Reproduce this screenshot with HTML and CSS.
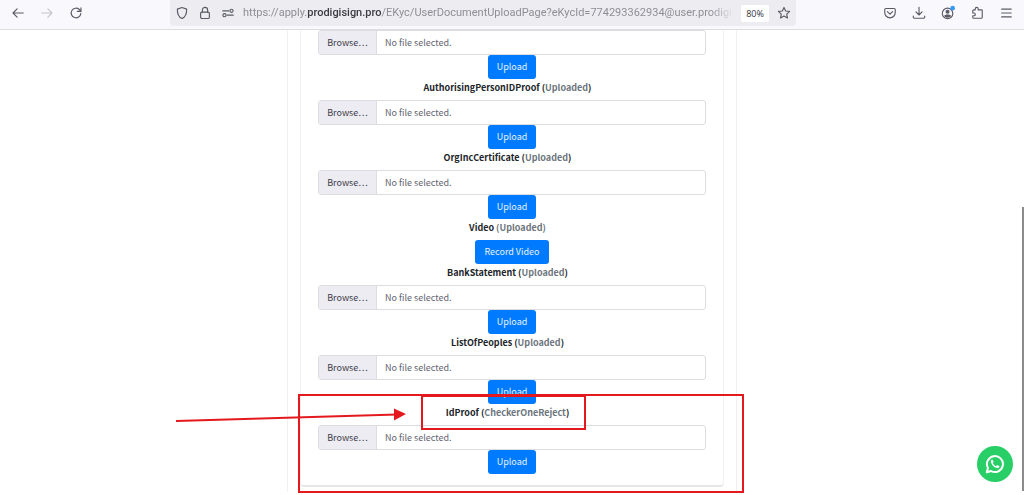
FILE: index.html
```html
<!DOCTYPE html>
<html lang="en">
<head>
    <meta charset="UTF-8">
    <meta name="viewport" content="width=device-width, initial-scale=1.0">
    <title>User Document Upload</title>
    <link rel="stylesheet" href="styles.css">
</head>
<body>
    <header class="toolbar">
        <nav class="nav-buttons">
            <button class="icon-btn" aria-label="Back">
                <svg viewBox="0 0 16 16"><path d="M14 8H2.5M7 3.2L2.3 8L7 12.8"/></svg>
            </button>
            <button class="icon-btn" aria-label="Forward" disabled>
                <svg viewBox="0 0 16 16"><path d="M2 8h11.500M9 3.200L13.700 8L9 12.800"/></svg>
            </button>
            <button class="icon-btn" aria-label="Reload">
                <svg viewBox="0 0 16 16"><path d="M13.500 8.500A5.500 5.500 0 1 1 11.800 4L13.500 5.800M13.700 2v4.200H9.500"/></svg>
            </button>
        </nav>

        <div class="address-bar">
            <button class="icon-btn" aria-label="Tracking protection">
                <svg viewBox="0 0 16 16"><path d="M8 1.700L13.300 3.600C13.500 8.800 11.700 12.500 8 14.300C4.300 12.500 2.500 8.800 2.700 3.600Z"/></svg>
            </button>
            <button class="icon-btn" aria-label="Connection secure">
                <svg viewBox="0 0 16 16"><rect x="3" y="7" width="10" height="7.300" rx="1.500"/><path d="M5 7V4.500a3 3 0 0 1 6 0V7"/></svg>
            </button>
            <button class="icon-btn" aria-label="Permissions">
                <svg viewBox="0 0 16 16"><path d="M2 5.500h7M7 10.500h7"/><circle cx="12" cy="5.500" r="1.800"/><circle cx="4" cy="10.500" r="1.800"/></svg>
            </button>
            <div class="url" role="textbox" aria-label="Address" contenteditable="true" spellcheck="false">https://apply.<b>prodigisign.pro</b>/EKyc/UserDocumentUploadPage?eKycId=774293362934@user.prodigis</div>
            <button class="zoom-level">80%</button>
            <button class="icon-btn" aria-label="Bookmark">
                <svg viewBox="0 0 16 16"><path d="M8 1.600L9.900 5.700L14.400 6.200L11.100 9.300L12 13.800L8 11.500L4 13.800L4.900 9.300L1.600 6.200L6.100 5.700Z"/></svg>
            </button>
        </div>

        <div class="tools">
            <button class="icon-btn" aria-label="Pocket">
                <svg viewBox="0 0 16 16"><path d="M3.300 2.800h9.400a1.300 1.300 0 0 1 1.300 1.300V7.500a6 6 0 0 1-12 0V4.100a1.300 1.300 0 0 1 1.300-1.300ZM5 6.500L8 9.300L11 6.500"/></svg>
            </button>
            <button class="icon-btn" aria-label="Downloads">
                <svg viewBox="0 0 16 16"><path d="M8 1.500V10M4.500 6.800L8 10.300L11.500 6.800M1.500 11.500v1a1.500 1.500 0 0 0 1.500 1.500h10a1.500 1.500 0 0 0 1.500-1.500v-1"/></svg>
            </button>
            <button class="icon-btn" aria-label="Account">
                <svg viewBox="0 0 16 16"><circle cx="7.500" cy="8.500" r="6"/><path class="solid" d="M5.200 6.500a2.300 2.300 0 1 1 4.600 0a2.300 2.300 0 1 1-4.600 0M3.500 11.500c0-2.500 8-2.500 8 0c-2 2.500-6 2.500-8 0Z"/><circle class="notice" cx="13.300" cy="2.500" r="2.700"/></svg>
            </button>
            <button class="icon-btn" aria-label="Extensions">
                <svg viewBox="0 0 16 16"><path d="M6 4.500V3.300a1.700 1.700 0 0 1 3.400 0V4.500H13a1 1 0 0 1 1 1V13a1 1 0 0 1-1 1H4.200a1 1 0 0 1-1-1V11.200h1.300a1.600 1.600 0 0 0 0-3.200H3.200V5.500a1 1 0 0 1 1-1Z"/></svg>
            </button>
            <button class="icon-btn" aria-label="Menu">
                <svg viewBox="0 0 16 16"><path d="M3 3.500h11M3 8h11M3 12.500h11"/></svg>
            </button>
        </div>
    </header>

    <main class="page">
        <div class="panel">
            <form class="card">
                <label class="file-input">
                    <input type="file" class="file-native">
                    <span class="browse">Browse…</span>
                    <span class="file-name">No file selected.</span>
                </label>
                <button type="button" class="btn">Upload</button>

                <h2 class="doc-title">AuthorisingPersonIDProof (<span>Uploaded</span>)</h2>
                <label class="file-input">
                    <input type="file" class="file-native">
                    <span class="browse">Browse…</span>
                    <span class="file-name">No file selected.</span>
                </label>
                <button type="button" class="btn">Upload</button>

                <h2 class="doc-title">OrgIncCertificate (<span>Uploaded</span>)</h2>
                <label class="file-input">
                    <input type="file" class="file-native">
                    <span class="browse">Browse…</span>
                    <span class="file-name">No file selected.</span>
                </label>
                <button type="button" class="btn">Upload</button>

                <h2 class="doc-title">Video <span>(Uploaded)</span></h2>
                <button type="button" class="btn">Record Video</button>

                <h2 class="doc-title">BankStatement (<span>Uploaded</span>)</h2>
                <label class="file-input">
                    <input type="file" class="file-native">
                    <span class="browse">Browse…</span>
                    <span class="file-name">No file selected.</span>
                </label>
                <button type="button" class="btn">Upload</button>

                <h2 class="doc-title">ListOfPeoples (<span>Uploaded</span>)</h2>
                <label class="file-input">
                    <input type="file" class="file-native">
                    <span class="browse">Browse…</span>
                    <span class="file-name">No file selected.</span>
                </label>
                <button type="button" class="btn">Upload</button>

                <h2 class="doc-title">IdProof (<span>CheckerOneReject</span>)</h2>
                <label class="file-input">
                    <input type="file" class="file-native">
                    <span class="browse">Browse…</span>
                    <span class="file-name">No file selected.</span>
                </label>
                <button type="button" class="btn">Upload</button>
            </form>

            <!-- arrow and boxes marking the rejected document -->
            <svg class="marks" viewBox="0 0 580 110" aria-hidden="true">
                <rect x="131" y="6" width="444" height="97"/>
                <rect x="254" y="7" width="163" height="33"/>
                <path d="M8 32L229 25.500"/>
                <path class="head" d="M226 19.500L238 25L226 31.500Z"/>
            </svg>
        </div>
        <div class="scroll-thumb"></div>
    </main>

    <a class="whatsapp" href="#" aria-label="Chat on WhatsApp">
        <svg viewBox="0 0 20 20">
            <path class="bubble" d="M1.800 18.200L3 14A8 8 0 1 1 6 17Z"/>
            <path class="phone" d="M7.300 5.500C6.300 5.500 5.600 6.600 5.900 8C6.500 10.900 9.100 13.500 12 14.100C13.300 14.300 14.500 13.500 14.500 12.300L12.200 11.100L11.100 12.300C9.700 11.700 8.400 10.400 7.800 9L8.700 7.900Z"/>
        </svg>
    </a>
</body>
</html>
```
FILE: styles.css
```css
* {
    box-sizing: border-box;
}
body {
    margin: 0;
    min-height: 100vh;
    display: flex;
    flex-direction: column;
    background-color: #fff;
    color: #212529;
    font-family: "Noto Sans CJK SC", "Open Sans", sans-serif;
    font-size: 9px;
}
button {
    border: none;
    padding: 0;
    font-family: inherit;
    cursor: pointer;
}

/* browser toolbar */
.toolbar {
    display: flex;
    align-items: flex-start;
    justify-content: space-between;
    height: 30px;
    padding: 0 10px;
    background-color: #f9f8fd;
    border-bottom: 1px solid #dddce2;
}
.nav-buttons, .tools {
    display: flex;
    align-items: center;
    gap: 13px;
    height: 26px;
}
.icon-btn {
    display: flex;
    align-items: center;
    justify-content: center;
    flex: none;
    width: 16px;
    height: 16px;
    background: none;
    color: #5b5b66;
}
.icon-btn:disabled {
    color: #c4c4cb;
}
.icon-btn svg {
    width: 14px;
    height: 14px;
    fill: none;
    stroke: currentColor;
    stroke-width: 1.3;
    stroke-linecap: round;
    stroke-linejoin: round;
    overflow: visible;
}
.icon-btn .solid {
    fill: currentColor;
    stroke: none;
}
.icon-btn .notice {
    fill: #3a9bf7;
    stroke: none;
}
.address-bar {
    display: flex;
    align-items: center;
    gap: 7px;
    flex: 1;
    min-width: 0;
    height: 26px;
    margin: 0 86px;
    padding: 0 4px;
    border-radius: 0 0 4px 4px;
    background-color: #edecf1;
}
.url {
    flex: 1;
    min-width: 0;
    overflow: hidden;
    white-space: nowrap;
    color: #8f8e96;
    font-family: Roboto, sans-serif;
    font-size: 11px;
    line-height: 26px;
    outline: none;
    mask-image: linear-gradient(to left, transparent, #000 24px);
}
.url b {
    color: #3c3b44;
    font-weight: 500;
}
.zoom-level {
    width: 28px;
    height: 17px;
    border-radius: 2px;
    background-color: #fff;
    color: #33323a;
    font-family: "Open Sans", sans-serif;
    font-size: 9px;
}

/* upload form */
.page {
    position: relative;
    flex: 1;
}
.panel {
    position: relative;
    width: 450px;
    max-width: 100%;
    margin: 0 auto;
    padding: 0 12px 5px;
    border: solid #f1f1f3;
    border-width: 0 1px;
}
.card {
    display: flex;
    flex-direction: column;
    align-items: center;
    padding: 0 17px 11px;
    border: 1px solid #f1f1f3;
    border-top: none;
    border-bottom: 2px solid #e6e6e8;
    border-radius: 0 0 4px 4px;
}
.file-input {
    position: relative;
    display: flex;
    align-items: stretch;
    width: 100%;
    height: 25px;
    border: 1px solid #dcdde0;
    border-radius: 3px;
    overflow: hidden;
    line-height: 24px;
    cursor: pointer;
}
.file-native {
    position: absolute;
    inset: 0;
    opacity: 0;
}
.browse {
    width: 58px;
    background-color: #edecf2;
    border-right: 1px solid #dcdde0;
    color: #3f3e4a;
    text-align: center;
}
.file-name {
    padding-left: 8px;
    color: #5f6470;
}
.btn {
    height: 24px;
    padding: 0 9px;
    border-radius: 3px;
    background-color: #007bff;
    color: #e6f2ff;
    font-size: 9px;
    line-height: 24px;
}
.doc-title {
    margin: 0;
    height: 21px;
    padding-right: 9px;
    font-size: 9px;
    font-weight: 700;
    line-height: 17px;
}
.doc-title span {
    color: #6c757d;
}
.marks {
    position: absolute;
    left: -120px;
    bottom: -7px;
    width: 580px;
    height: 110px;
    fill: none;
    stroke: #e3191d;
    stroke-width: 2;
    pointer-events: none;
}
.marks .head {
    fill: #e3191d;
    stroke: none;
}
.scroll-thumb {
    position: absolute;
    top: 177px;
    right: 0;
    bottom: 4px;
    width: 2px;
    background-color: #8b8b8b;
}
.whatsapp {
    position: fixed;
    right: 11px;
    bottom: 13px;
    display: flex;
    align-items: center;
    justify-content: center;
    width: 36px;
    height: 36px;
    border-radius: 50%;
    background-color: #28cf66;
}
.whatsapp svg {
    width: 20px;
    height: 20px;
}
.whatsapp .bubble {
    fill: none;
    stroke: #fff;
    stroke-width: 2;
    stroke-linejoin: round;
}
.whatsapp .phone {
    fill: #fff;
}
```
